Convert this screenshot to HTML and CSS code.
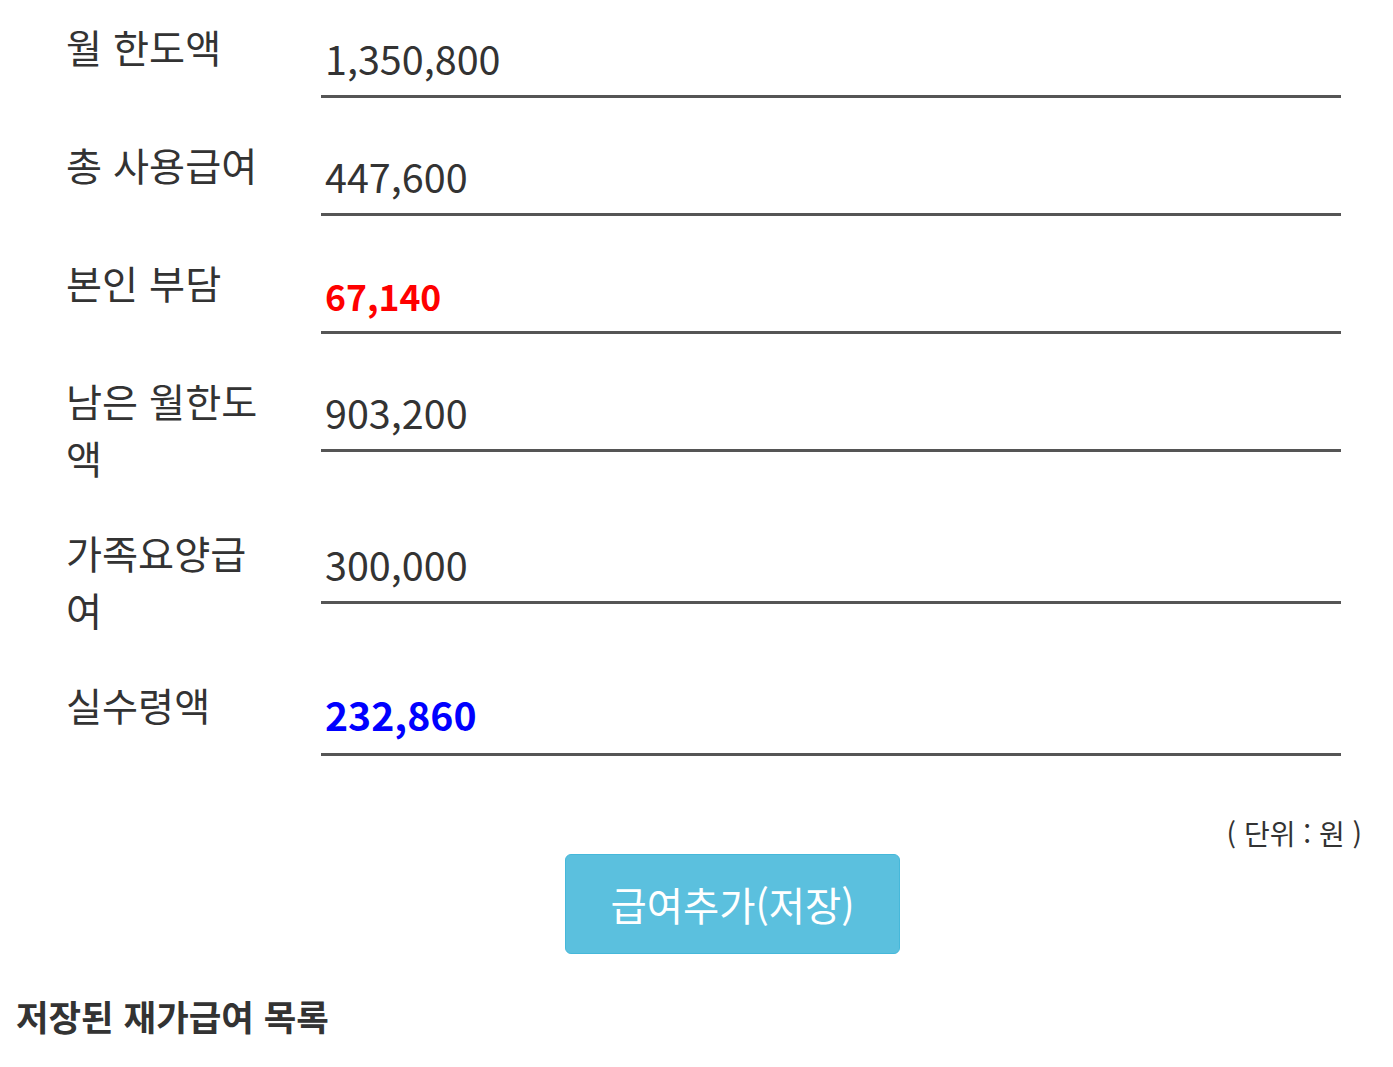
FILE: index.html
```html
<!DOCTYPE html>
<html lang="ko">
<head>
<meta charset="utf-8">
<title>재가급여 계산</title>
<link rel="stylesheet" href="styles.css">
</head>
<body>
<div class="page">
  <div class="form">
    <div class="row">
      <div class="label">월 한도액</div>
      <div class="field">1,350,800</div>
    </div>
    <div class="row">
      <div class="label">총 사용급여</div>
      <div class="field">447,600</div>
    </div>
    <div class="row">
      <div class="label">본인 부담</div>
      <div class="field field-red">67,140</div>
    </div>
    <div class="row">
      <div class="label">남은 월한도액</div>
      <div class="field">903,200</div>
    </div>
    <div class="row">
      <div class="label">가족요양급여</div>
      <div class="field">300,000</div>
    </div>
    <div class="row">
      <div class="label">실수령액</div>
      <div class="field field-blue">232,860</div>
    </div>
  </div>
  <div class="unit">( 단위 : 원 )</div>
  <div class="actions">
    <button class="btn-save" type="button">급여추가(저장)</button>
  </div>
  <h3 class="list-title">저장된 재가급여 목록</h3>
</div>
</body>
</html>
```

FILE: styles.css
```css
html, body {
  margin: 0;
  padding: 0;
  background: #fff;
}
body {
  font-family: "Noto Sans CJK KR", "Noto Sans", sans-serif;
  color: #333;
}
.page {
  padding-top: 18px;
}
.form {
  padding-left: 66px;
  padding-right: 52px;
}
.row {
  display: flex;
  align-items: flex-start;
  margin-bottom: 38px;
}
.label {
  width: 200px;
  margin-right: 55px;
  font-size: 39.2px;
  line-height: 57px;
  flex: none;
}
.field {
  flex: 1;
  box-sizing: border-box;
  height: 80px;
  border-bottom: 3px solid #555;
  padding-left: 4px;
  padding-top: 11px;
  font-size: 39.5px;
  line-height: normal;
  color: #333;
}
.field-red {
  color: #ff0000;
  font-weight: bold;
  font-size: 35.5px;
  padding-top: 16px;
}
.field-blue {
  color: #0000ff;
  font-weight: bold;
  font-size: 39.2px;
  padding-top: 10px;
}
.unit {
  text-align: right;
  padding-right: 31px;
  margin-top: 57px;
  font-size: 28px;
  line-height: normal;
}
.actions {
  display: flex;
  justify-content: center;
  padding-left: 72px;
  margin-top: 1px;
}
.btn-save {
  font-family: "Noto Sans CJK KR", "Noto Sans", sans-serif;
  font-size: 39.4px;
  line-height: normal;
  color: #fff;
  background: #5bc0de;
  border: 1px solid #46b8da;
  border-radius: 6px;
  padding: 20px 44.5px 21px;
  cursor: pointer;
}
.list-title {
  margin: 36px 0 0;
  padding-left: 16px;
  font-size: 35.4px;
  line-height: normal;
  font-weight: bold;
  color: #333;
}
```
